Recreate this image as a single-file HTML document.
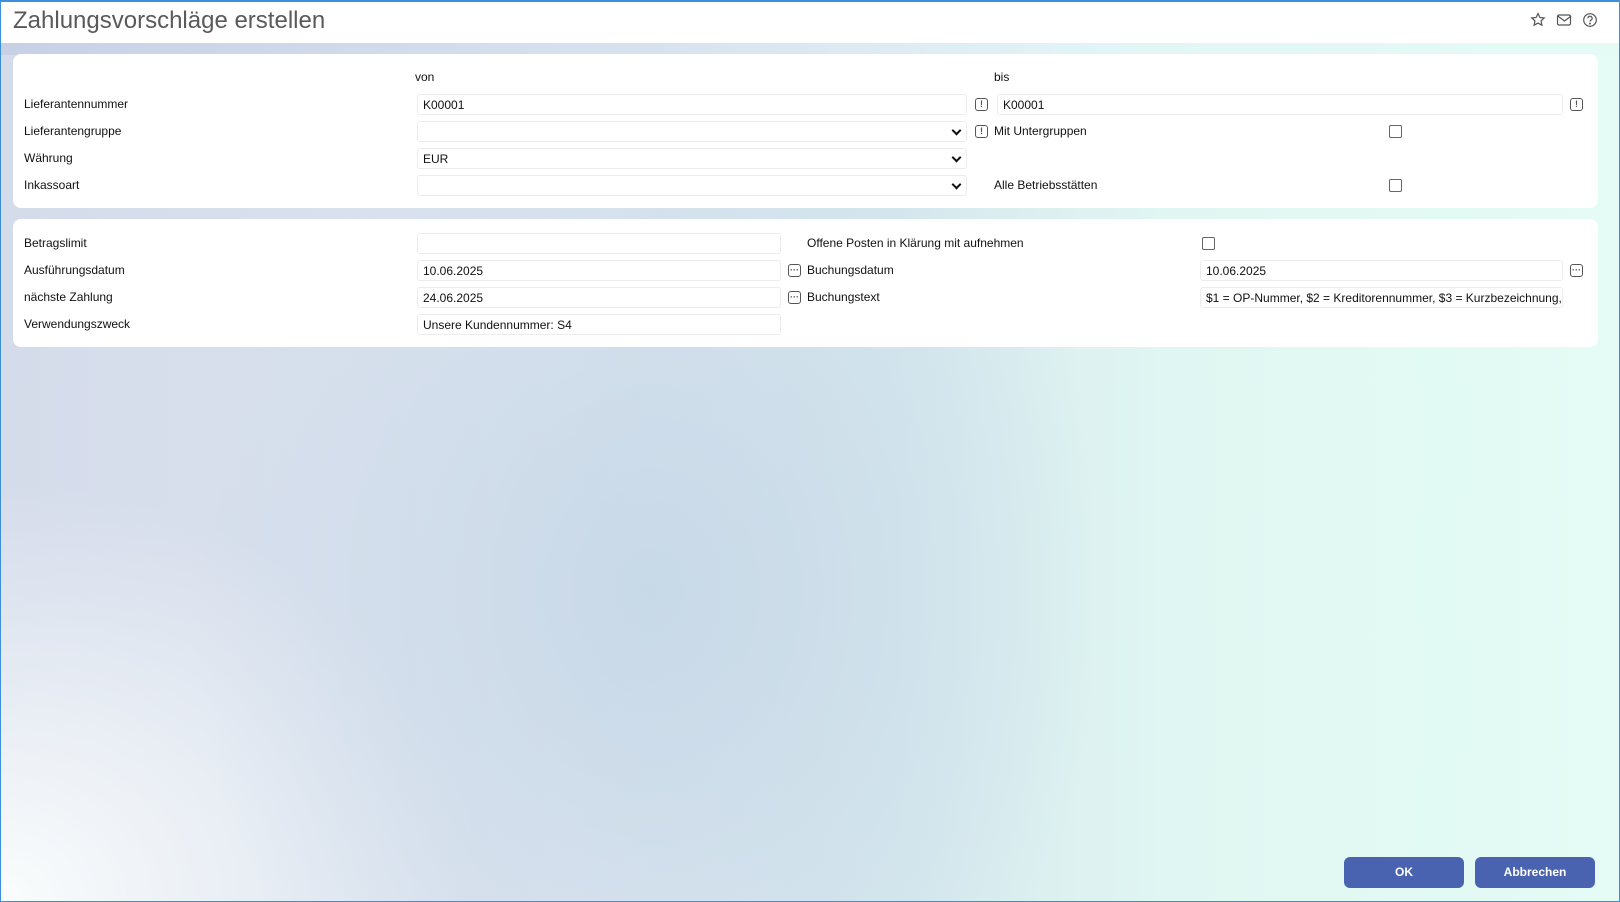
<!DOCTYPE html>
<html><head><meta charset="utf-8"><style>
*{box-sizing:border-box;margin:0;padding:0}
html,body{width:1620px;height:902px;overflow:hidden}
body{position:relative;font-family:"Liberation Sans",Arial,sans-serif;font-size:12px;color:#111;
background:
radial-gradient(ellipse 460px 560px at 650px 590px,rgba(196,214,230,0.85),rgba(196,214,230,0) 100%),
radial-gradient(ellipse 650px 560px at 0px 902px,rgba(250,253,253,1),rgba(250,253,253,0) 75%),
linear-gradient(90deg,#d4dbea 0%,#dde5f0 35%,#d6e8ee 55%,#e0f6f2 72%,#e4fcf5 100%);
}
.frame{position:absolute;left:0;top:0;width:1620px;height:902px;border:1px solid #3b8fdc;border-top:2px solid #3b8fdc;pointer-events:none}
.hdr{position:absolute;left:0;top:0;width:1620px;height:43px;background:#fff}
.title{position:absolute;left:13px;top:7px;font-size:24px;color:#5a5a5a}
.topband{position:absolute;left:0;top:43px;width:1620px;height:12px;background:linear-gradient(90deg,#c8d0e6,#d8e2ef 40%,#e2f6f6 70%,#e4fbf5)}
.panel{position:absolute;left:13px;width:1585px;background:#fff;border-radius:8px}
.l{position:absolute;white-space:nowrap;line-height:14px}
.in{position:absolute;height:21px;border:1px solid #ececec;border-radius:3px;background:#fff;padding:3px 0 0 5px;white-space:nowrap;overflow:hidden;line-height:14px}
.sel::after{content:"";position:absolute;right:6px;top:5px;width:5px;height:5px;border-right:2px solid #111;border-bottom:2px solid #111;transform:rotate(45deg)}
.cb{position:absolute;width:13px;height:13px;border:1px solid #666;border-radius:2px;background:#fff}
.ic{position:absolute;width:13px;height:13px;border:1.5px solid #555;border-radius:3px;font-size:9px;font-weight:bold;text-align:center;line-height:10px;color:#555}
.btn{position:absolute;top:857px;width:120px;height:31px;background:#4a63b0;color:#fff;border-radius:6px;text-align:center;line-height:31px;font-size:12px;font-weight:bold}
</style></head><body>
<div class="hdr"></div>
<div class="title">Zahlungsvorschläge erstellen</div>
<svg style="position:absolute;left:1530px;top:12px" width="80" height="16" viewBox="0 0 80 16" fill="none" stroke="#555" stroke-width="1.2">
<path d="M8 1.5l1.9 4 4.3.5-3.2 2.9.9 4.3L8 11.1 4.1 13.2l.9-4.3L1.8 6l4.3-.5z"/>
<rect x="27.5" y="3" width="13" height="10" rx="1.5"/><path d="M27.8 4l6.7 5 6.7-5"/>
<circle cx="60" cy="8" r="6.3"/><path d="M57.9 6.3a2.1 2.1 0 1 1 3 1.9c-.6.3-.9.7-.9 1.4"/><circle cx="60" cy="11.6" r=".4" fill="#555"/>
</svg>
<div class="topband"></div>

<div class="panel" style="top:54px;height:154px"></div>
<div class="l" style="left:415px;top:70px">von</div>
<div class="l" style="left:994px;top:70px">bis</div>
<div class="l" style="left:24px;top:97px">Lieferantennummer</div>
<div class="in" style="left:417px;top:94px;width:550px">K00001</div>
<div class="ic" style="left:975px;top:98px">!</div>
<div class="in" style="left:997px;top:94px;width:566px">K00001</div>
<div class="ic" style="left:1570px;top:98px">!</div>
<div class="l" style="left:24px;top:124px">Lieferantengruppe</div>
<div class="in sel" style="left:417px;top:121px;width:550px"></div>
<div class="ic" style="left:975px;top:125px">!</div>
<div class="l" style="left:994px;top:124px">Mit Untergruppen</div>
<div class="cb" style="left:1389px;top:125px"></div>
<div class="l" style="left:24px;top:151px">Währung</div>
<div class="in sel" style="left:417px;top:148px;width:550px">EUR</div>
<div class="l" style="left:24px;top:178px">Inkassoart</div>
<div class="in sel" style="left:417px;top:175px;width:550px"></div>
<div class="l" style="left:994px;top:178px">Alle Betriebsstätten</div>
<div class="cb" style="left:1389px;top:179px"></div>

<div class="panel" style="top:219px;height:128px"></div>
<div class="l" style="left:24px;top:236px">Betragslimit</div>
<div class="in" style="left:417px;top:233px;width:364px"></div>
<div class="l" style="left:807px;top:236px">Offene Posten in Klärung mit aufnehmen</div>
<div class="cb" style="left:1202px;top:237px"></div>
<div class="l" style="left:24px;top:263px">Ausführungsdatum</div>
<div class="in" style="left:417px;top:260px;width:364px">10.06.2025</div>
<div class="ic" style="left:788px;top:264px">···</div>
<div class="l" style="left:807px;top:263px">Buchungsdatum</div>
<div class="in" style="left:1200px;top:260px;width:363px">10.06.2025</div>
<div class="ic" style="left:1570px;top:264px">···</div>
<div class="l" style="left:24px;top:290px">nächste Zahlung</div>
<div class="in" style="left:417px;top:287px;width:364px">24.06.2025</div>
<div class="ic" style="left:788px;top:291px">···</div>
<div class="l" style="left:807px;top:290px">Buchungstext</div>
<div class="in" style="left:1200px;top:287px;width:363px">$1 = OP-Nummer, $2 = Kreditorennummer, $3 = Kurzbezeichnung, $4</div>
<div class="l" style="left:24px;top:317px">Verwendungszweck</div>
<div class="in" style="left:417px;top:314px;width:364px">Unsere Kundennummer: S4</div>

<div class="btn" style="left:1344px">OK</div>
<div class="btn" style="left:1475px">Abbrechen</div>
<div class="frame"></div>
</body></html>
